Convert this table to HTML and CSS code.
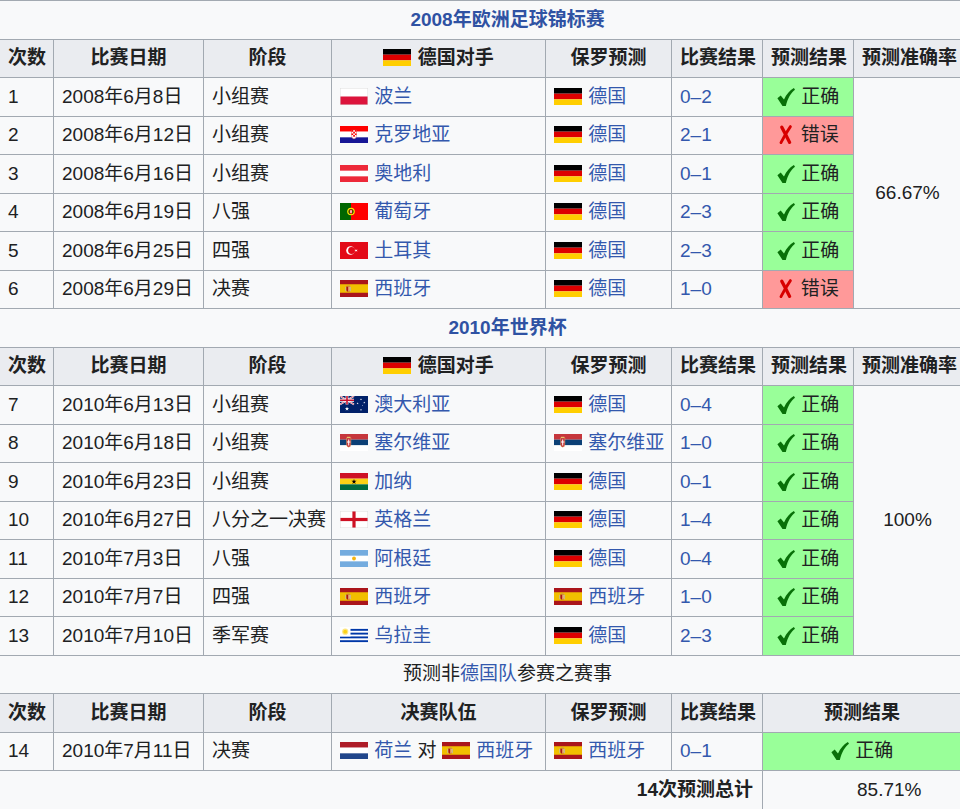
FILE: index.html
```html
<!DOCTYPE html>
<html lang="zh">
<head>
<meta charset="utf-8">
<title>保罗预测</title>
<link rel="stylesheet" href="styles.css">
</head>
<body>
<svg class="defs" width="0" height="0" aria-hidden="true">
  <defs>
    <path id="st" d="M0,-1 L.2245,-.309 L.951,-.309 L.363,.118 L.588,.809 L0,.382 L-.588,.809 L-.363,.118 L-.951,-.309 L-.2245,-.309Z"/>
    <symbol id="de" viewBox="0 0 28 17"><rect width="28" height="5.67" fill="#000"/><rect y="5.67" width="28" height="5.67" fill="#DD0000"/><rect y="11.33" width="28" height="5.67" fill="#FFCE00"/></symbol>
    <symbol id="pl" viewBox="0 0 28 17"><rect width="28" height="8.5" fill="#fff"/><rect y="8.5" width="28" height="8.5" fill="#DC143C"/><rect x=".25" y=".25" width="27.5" height="16.5" fill="none" stroke="#ddd" stroke-width=".5"/></symbol>
    <symbol id="hr" viewBox="0 0 28 17"><rect width="28" height="5.67" fill="#FF0000"/><rect y="5.67" width="28" height="5.67" fill="#fff"/><rect y="11.33" width="28" height="5.67" fill="#171796"/><path d="M11.5 4h5v5.5q0 3 -2.5 3.5q-2.5 -.5 -2.5 -3.5z" fill="#fff" stroke="#c33" stroke-width=".4"/><path d="M11.5 4h1.7v1.7h-1.7zM14.9 4h1.6v1.7h-1.6zM13.2 5.7h1.7v1.7h-1.7zM11.5 7.4h1.7v1.7h-1.7zM14.9 7.4h1.6v1.7h-1.6zM13.2 9.1h1.7v1.7h-1.7z" fill="#f00"/></symbol>
    <symbol id="at" viewBox="0 0 28 17"><rect width="28" height="17" fill="#ED2939"/><rect y="5.67" width="28" height="5.67" fill="#fff"/></symbol>
    <symbol id="pt" viewBox="0 0 28 17"><rect width="28" height="17" fill="#FF0000"/><rect width="11" height="17" fill="#006600"/><circle cx="11" cy="8.5" r="3.8" fill="#FFE000"/><circle cx="11" cy="8.5" r="2.6" fill="#006600"/><path d="M9.6 6.6h2.8v2.8q0 1.5 -1.4 1.6q-1.4 -.1 -1.4 -1.6z" fill="#FF0000"/><path d="M10.3 7.3h1.4v2q0 .8 -.7 .9q-.7 -.1 -.7 -.9z" fill="#fff"/></symbol>
    <symbol id="tr" viewBox="0 0 28 17"><rect width="28" height="17" fill="#E30A17"/><circle cx="10.5" cy="8.5" r="4.3" fill="#fff"/><circle cx="11.6" cy="8.5" r="3.45" fill="#E30A17"/><use href="#st" transform="translate(16.2 8.5) rotate(-90) scale(1.7)" fill="#fff"/></symbol>
    <symbol id="es" viewBox="0 0 28 17"><rect width="28" height="17" fill="#AA151B"/><rect y="4.25" width="28" height="8.5" fill="#F1BF00"/><path d="M6.3 6.4h3.8v3.6q0 1.6 -1.9 1.7q-1.9 -.1 -1.9 -1.7z" fill="#AD1519"/><path d="M8.2 6.4h1.9v3.6q0 1.6 -1.9 1.7z" fill="#e8b070"/><rect x="5.4" y="6.8" width=".7" height="4.4" fill="#bbb"/><rect x="10.3" y="6.8" width=".7" height="4.4" fill="#bbb"/><rect x="6.8" y="5.4" width="2.8" height=".9" fill="#c8a03c"/></symbol>
    <symbol id="au" viewBox="0 0 28 17"><rect width="28" height="17" fill="#012169"/><g><path d="M0 0L14 8.5M14 0L0 8.5" stroke="#fff" stroke-width="1.7"/><path d="M0 0L14 8.5M14 0L0 8.5" stroke="#C8102E" stroke-width=".6"/><path d="M7 0V8.5M0 4.25H14" stroke="#fff" stroke-width="2.8"/><path d="M7 0V8.5M0 4.25H14" stroke="#C8102E" stroke-width="1.6"/></g><g fill="#fff"><use href="#st" transform="translate(7 12.8) scale(2.2)"/><use href="#st" transform="translate(21 13.8) scale(1.1)"/><use href="#st" transform="translate(17.6 7.4) scale(1.1)"/><use href="#st" transform="translate(21 3.4) scale(1.1)"/><use href="#st" transform="translate(24.3 6.7) scale(1.1)"/><use href="#st" transform="translate(22.6 9.4) scale(.6)"/></g></symbol>
    <symbol id="rs" viewBox="0 0 28 17"><rect width="28" height="5.67" fill="#C6363C"/><rect y="5.67" width="28" height="5.67" fill="#0C4076"/><rect y="11.33" width="28" height="5.67" fill="#fff"/><path d="M6.5 3.8h4.4v6.6q0 2.4 -2.2 2.8q-2.2 -.4 -2.2 -2.8z" fill="#C6363C" stroke="#e9c46a" stroke-width=".4"/><path d="M8.2 5.5h1v2h1.2v1h-1.2v3h-1v-3h-1.2v-1h1.2z" fill="#fff"/><rect x="7" y="2.8" width="3.4" height="1.2" fill="#e9c46a"/></symbol>
    <symbol id="gh" viewBox="0 0 28 17"><rect width="28" height="5.67" fill="#CE1126"/><rect y="5.67" width="28" height="5.67" fill="#FCD116"/><rect y="11.33" width="28" height="5.67" fill="#006B3F"/><use href="#st" transform="translate(14 8.7) scale(2.7)" fill="#000"/></symbol>
    <symbol id="en" viewBox="0 0 28 17"><rect width="28" height="17" fill="#fff"/><rect y="6.9" width="28" height="3.2" fill="#CE1124"/><rect x="12.4" width="3.2" height="17" fill="#CE1124"/><rect x=".25" y=".25" width="27.5" height="16.5" fill="none" stroke="#ddd" stroke-width=".5"/></symbol>
    <symbol id="ar" viewBox="0 0 28 17"><rect width="28" height="17" fill="#74ACDF"/><rect y="5.67" width="28" height="5.67" fill="#fff"/><circle cx="14" cy="8.5" r="1.9" fill="#F6B40E"/></symbol>
    <symbol id="uy" viewBox="0 0 28 17"><rect width="28" height="17" fill="#fff"/><g fill="#0038A8"><rect y="1.89" width="28" height="1.89"/><rect y="5.67" width="28" height="1.89"/><rect y="9.44" width="28" height="1.89"/><rect y="13.22" width="28" height="1.89"/></g><rect width="10.5" height="9.44" fill="#fff"/><circle cx="5.2" cy="4.7" r="3.1" fill="#FCD116" opacity=".55"/><circle cx="5.2" cy="4.7" r="1.9" fill="#FCD116"/></symbol>
    <symbol id="nl" viewBox="0 0 28 17"><rect width="28" height="5.67" fill="#AE1C28"/><rect y="5.67" width="28" height="5.67" fill="#fff"/><rect y="11.33" width="28" height="5.67" fill="#21468B"/></symbol>
    <symbol id="ok" viewBox="0 0 18 18"><path d="M0.4 10.2L3.7 7.5L7 11.4C9.4 6.3 12.7 2.4 16.9 0L18 1.7C13.9 4.9 10.8 10.1 8.8 17.9L5.5 17.9Z" fill="#087008"/></symbol>
    <symbol id="no" viewBox="0 0 18 22"><g fill="none" stroke="#d80000" stroke-linecap="round"><path d="M5 3.2Q9.2 11 13.4 19.4" stroke-width="3.4"/><path d="M14.2 2.6Q9 10 4.2 19.6" stroke-width="3"/></g></symbol>
  </defs>
</svg>

<table class="wt">
  <colgroup>
    <col class="c1"><col class="c2"><col class="c3"><col class="c4"><col class="c5"><col class="c6"><col class="c7"><col class="c8">
  </colgroup>
  <tbody>
    <tr class="title"><th colspan="8"><a href="#">2008年欧洲足球锦标赛</a></th></tr>
    <tr class="hd">
      <th>次数</th><th>比赛日期</th><th>阶段</th>
      <th><svg class="flag"><use href="#de"/></svg> 德国对手</th>
      <th>保罗预测</th><th>比赛结果</th><th>预测结果</th><th>预测准确率</th>
    </tr>
    <tr><td>1</td><td>2008年6月8日</td><td>小组赛</td><td><svg class="flag"><use href="#pl"/></svg> <a href="#">波兰</a></td><td><svg class="flag"><use href="#de"/></svg> <a href="#">德国</a></td><td><a href="#">0–2</a></td><td class="yes"><svg class="ck"><use href="#ok"/></svg> 正确</td><td class="acc" rowspan="6">66.67%</td></tr>
    <tr><td>2</td><td>2008年6月12日</td><td>小组赛</td><td><svg class="flag"><use href="#hr"/></svg> <a href="#">克罗地亚</a></td><td><svg class="flag"><use href="#de"/></svg> <a href="#">德国</a></td><td><a href="#">2–1</a></td><td class="nop"><svg class="xk"><use href="#no"/></svg> 错误</td></tr>
    <tr><td>3</td><td>2008年6月16日</td><td>小组赛</td><td><svg class="flag"><use href="#at"/></svg> <a href="#">奥地利</a></td><td><svg class="flag"><use href="#de"/></svg> <a href="#">德国</a></td><td><a href="#">0–1</a></td><td class="yes"><svg class="ck"><use href="#ok"/></svg> 正确</td></tr>
    <tr><td>4</td><td>2008年6月19日</td><td>八强</td><td><svg class="flag"><use href="#pt"/></svg> <a href="#">葡萄牙</a></td><td><svg class="flag"><use href="#de"/></svg> <a href="#">德国</a></td><td><a href="#">2–3</a></td><td class="yes"><svg class="ck"><use href="#ok"/></svg> 正确</td></tr>
    <tr><td>5</td><td>2008年6月25日</td><td>四强</td><td><svg class="flag"><use href="#tr"/></svg> <a href="#">土耳其</a></td><td><svg class="flag"><use href="#de"/></svg> <a href="#">德国</a></td><td><a href="#">2–3</a></td><td class="yes"><svg class="ck"><use href="#ok"/></svg> 正确</td></tr>
    <tr><td>6</td><td>2008年6月29日</td><td>决赛</td><td><svg class="flag"><use href="#es"/></svg> <a href="#">西班牙</a></td><td><svg class="flag"><use href="#de"/></svg> <a href="#">德国</a></td><td><a href="#">1–0</a></td><td class="nop"><svg class="xk"><use href="#no"/></svg> 错误</td></tr>

    <tr class="title"><th colspan="8"><a href="#">2010年世界杯</a></th></tr>
    <tr class="hd">
      <th>次数</th><th>比赛日期</th><th>阶段</th>
      <th><svg class="flag"><use href="#de"/></svg> 德国对手</th>
      <th>保罗预测</th><th>比赛结果</th><th>预测结果</th><th>预测准确率</th>
    </tr>
    <tr><td>7</td><td>2010年6月13日</td><td>小组赛</td><td><svg class="flag"><use href="#au"/></svg> <a href="#">澳大利亚</a></td><td><svg class="flag"><use href="#de"/></svg> <a href="#">德国</a></td><td><a href="#">0–4</a></td><td class="yes"><svg class="ck"><use href="#ok"/></svg> 正确</td><td class="acc" rowspan="7">100%</td></tr>
    <tr><td>8</td><td>2010年6月18日</td><td>小组赛</td><td><svg class="flag"><use href="#rs"/></svg> <a href="#">塞尔维亚</a></td><td><svg class="flag"><use href="#rs"/></svg> <a href="#">塞尔维亚</a></td><td><a href="#">1–0</a></td><td class="yes"><svg class="ck"><use href="#ok"/></svg> 正确</td></tr>
    <tr><td>9</td><td>2010年6月23日</td><td>小组赛</td><td><svg class="flag"><use href="#gh"/></svg> <a href="#">加纳</a></td><td><svg class="flag"><use href="#de"/></svg> <a href="#">德国</a></td><td><a href="#">0–1</a></td><td class="yes"><svg class="ck"><use href="#ok"/></svg> 正确</td></tr>
    <tr><td>10</td><td>2010年6月27日</td><td>八分之一决赛</td><td><svg class="flag"><use href="#en"/></svg> <a href="#">英格兰</a></td><td><svg class="flag"><use href="#de"/></svg> <a href="#">德国</a></td><td><a href="#">1–4</a></td><td class="yes"><svg class="ck"><use href="#ok"/></svg> 正确</td></tr>
    <tr><td>11</td><td>2010年7月3日</td><td>八强</td><td><svg class="flag"><use href="#ar"/></svg> <a href="#">阿根廷</a></td><td><svg class="flag"><use href="#de"/></svg> <a href="#">德国</a></td><td><a href="#">0–4</a></td><td class="yes"><svg class="ck"><use href="#ok"/></svg> 正确</td></tr>
    <tr><td>12</td><td>2010年7月7日</td><td>四强</td><td><svg class="flag"><use href="#es"/></svg> <a href="#">西班牙</a></td><td><svg class="flag"><use href="#es"/></svg> <a href="#">西班牙</a></td><td><a href="#">1–0</a></td><td class="yes"><svg class="ck"><use href="#ok"/></svg> 正确</td></tr>
    <tr><td>13</td><td>2010年7月10日</td><td>季军赛</td><td><svg class="flag"><use href="#uy"/></svg> <a href="#">乌拉圭</a></td><td><svg class="flag"><use href="#de"/></svg> <a href="#">德国</a></td><td><a href="#">2–3</a></td><td class="yes"><svg class="ck"><use href="#ok"/></svg> 正确</td></tr>

    <tr class="title cap"><th colspan="8">预测非<a href="#">德国队</a>参赛之赛事</th></tr>
    <tr class="hd">
      <th>次数</th><th>比赛日期</th><th>阶段</th><th>决赛队伍</th>
      <th>保罗预测</th><th>比赛结果</th><th colspan="2">预测结果</th>
    </tr>
    <tr><td>14</td><td>2010年7月11日</td><td>决赛</td><td><svg class="flag"><use href="#nl"/></svg> <a href="#">荷兰</a> 对 <svg class="flag"><use href="#es"/></svg> <a href="#">西班牙</a></td><td><svg class="flag"><use href="#es"/></svg> <a href="#">西班牙</a></td><td><a href="#">0–1</a></td><td class="yes" colspan="2"><svg class="ck"><use href="#ok"/></svg> 正确</td></tr>
    <tr class="total"><th colspan="6">14次预测总计</th><td colspan="2">85.71%</td></tr>
  </tbody>
</table>
</body>
</html>
```

FILE: styles.css
```css
html, body {
  margin: 0;
  padding: 0;
  background: #f8f9fa;
  overflow: hidden;
}

body {
  font-family: "Liberation Sans", "Noto Sans CJK SC", sans-serif;
  font-size: 19px;
  color: #202122;
}

.defs {
  position: absolute;
  width: 0;
  height: 0;
}

a {
  color: #3358ad;
  text-decoration: none;
}

.wt {
  border-collapse: collapse;
  table-layout: fixed;
  width: 962px;
  margin-left: -1px;
  background: #f8f9fa;
}

.c1 { width: 54px; }
.c2 { width: 150px; }
.c3 { width: 128px; }
.c4 { width: 214px; }
.c5 { width: 126px; }
.c6 { width: 91px; }
.c7 { width: 91px; }
.c8 { width: 108px; }

.wt tr {
  height: 38.5px;
}

.wt td, .wt th {
  border: 1px solid #a2a9b1;
  padding: 0 8px;
  white-space: nowrap;
  overflow: hidden;
  vertical-align: middle;
  text-align: left;
  line-height: 22px;
}

.hd th {
  background: #eaecf0;
  font-weight: bold;
  text-align: center;
}

.title th {
  background: #f8f9fa;
  border-left: none;
  border-right: none;
  text-align: center;
  padding: 0 0 0 54px;
  font-weight: bold;
}

.title th a {
  color: #2f52a3;
}

.title.cap th {
  font-weight: normal;
}

.title.cap th a {
  color: #3358ad;
}

.flag {
  width: 28px;
  height: 17px;
  vertical-align: -2px;
  margin-right: 1px;
}

.yes, .nop {
  text-align: center !important;
}

.yes { background: #9f9; }
.nop { background: #f99; }

.ck {
  width: 18px;
  height: 18px;
  vertical-align: -3px;
  margin-right: 1px;
}

.xk {
  width: 17px;
  height: 21px;
  vertical-align: -4px;
  margin-right: 1px;
}

.acc {
  text-align: center !important;
  background: #f8f9fa;
}

.total th {
  font-weight: bold;
  text-align: right;
  border-left: none;
  border-bottom: none;
  padding-right: 9px;
  background: #f8f9fa;
}

.total td {
  text-align: center;
  padding: 0 0 0 54px;
  border-right: none;
  border-bottom: none;
}
```
